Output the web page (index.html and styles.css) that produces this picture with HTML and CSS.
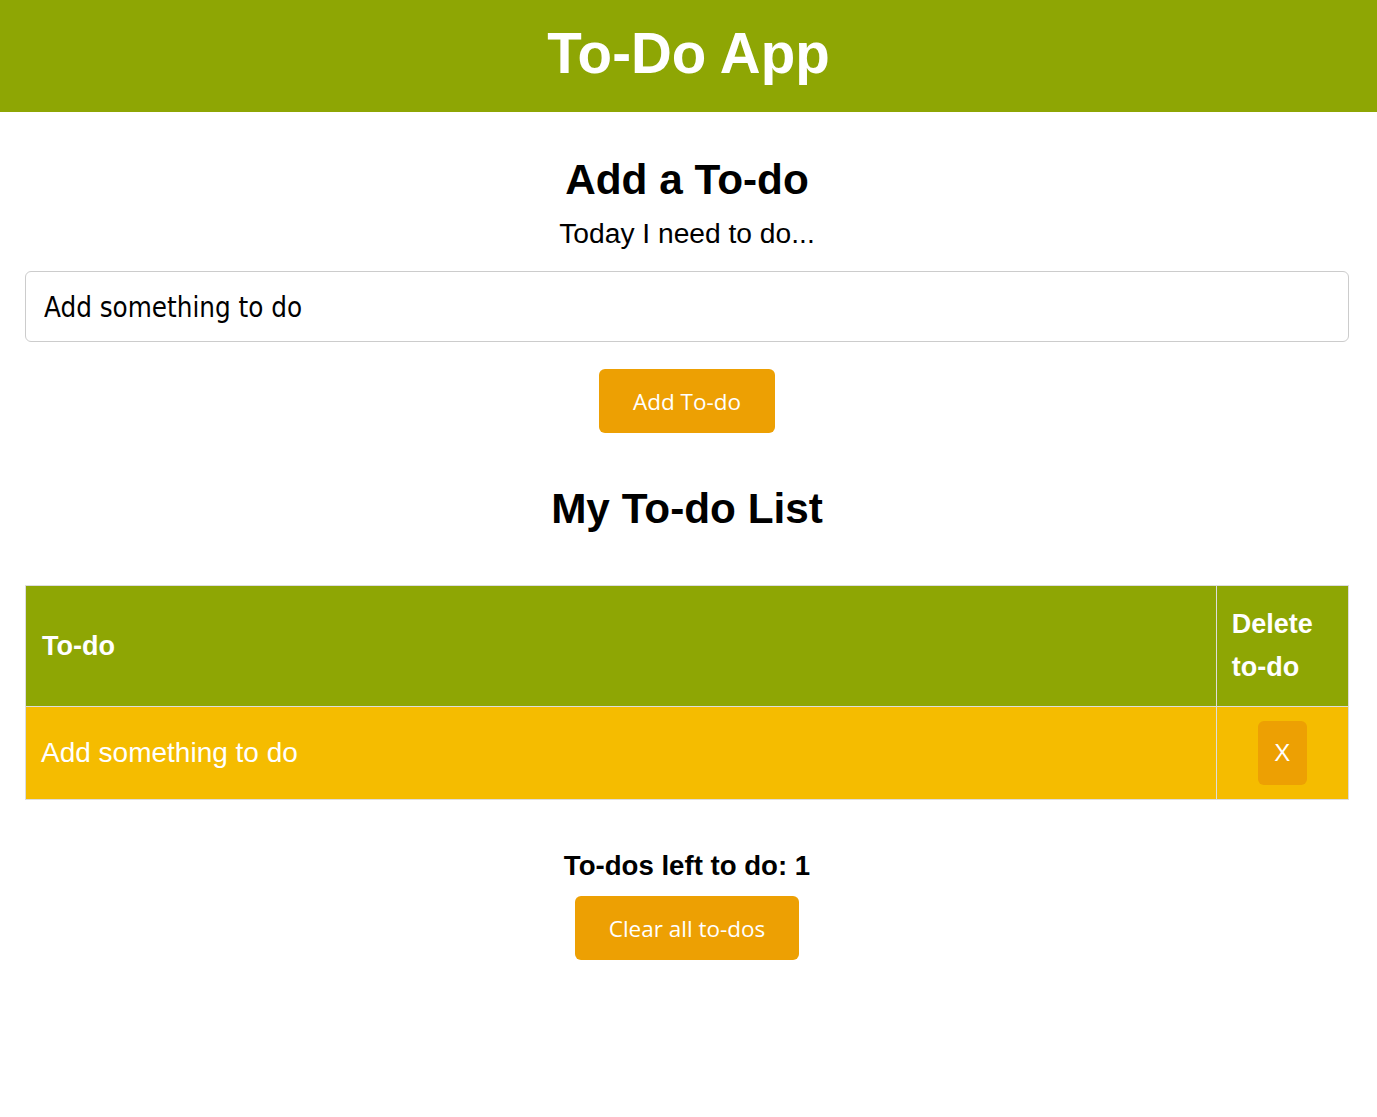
FILE: index.html
```html
<!DOCTYPE html>
<html lang="en">
<head>
<meta charset="utf-8">
<title>To-Do App</title>
<link rel="stylesheet" href="styles.css">
</head>
<body>
<header class="app-header">
  <h1 class="app-title">To-Do App</h1>
</header>
<main class="content">
  <section class="add-section">
    <h2 class="section-title">Add a To-do</h2>
    <p class="prompt">Today I need to do...</p>
    <input class="todo-input" type="text" value="Add something to do">
    <div class="btn-row">
      <button class="btn">Add To-do</button>
    </div>
  </section>
  <section class="list-section">
    <h2 class="section-title list-title">My To-do List</h2>
    <table class="todo-table">
      <thead>
        <tr>
          <th class="col-todo">To-do</th>
          <th class="col-delete">Delete to-do</th>
        </tr>
      </thead>
      <tbody>
        <tr>
          <td class="cell-todo">Add something to do</td>
          <td class="cell-delete"><button class="btn-delete">X</button></td>
        </tr>
      </tbody>
    </table>
    <p class="count">To-dos left to do: 1</p>
    <div class="btn-row">
      <button class="btn">Clear all to-dos</button>
    </div>
  </section>
</main>
</body>
</html>
```

FILE: styles.css
```css
html, body {
  margin: 0;
  padding: 0;
  background: #ffffff;
}

body {
  font-family: "Liberation Sans", Arial, sans-serif;
  color: #000000;
}

.app-header {
  background: #8ea604;
  height: 112px;
  display: flex;
  align-items: center;
  justify-content: center;
}

.app-title {
  margin: 0;
  color: #ffffff;
  font-size: 56.5px;
  font-weight: 700;
  line-height: 1;
  padding-bottom: 4px;
}

.content {
  padding: 0 28px 0 25px;
}

.add-section {
  text-align: center;
  padding-top: 44px;
}

.section-title {
  margin: 0;
  font-size: 42.3px;
  font-weight: 700;
  line-height: 48px;
}

.prompt {
  margin: 11px 0 0;
  font-size: 28.2px;
  line-height: 36px;
}

.todo-input {
  display: block;
  box-sizing: border-box;
  width: 100%;
  height: 71px;
  margin-top: 20px;
  padding: 0 18px;
  border: 1px solid #cccccc;
  border-radius: 6px;
  font-family: "DejaVu Sans Condensed", "DejaVu Sans", sans-serif;
  font-stretch: condensed;
  font-size: 27.5px;
  color: #000000;
  background: #ffffff;
  outline: none;
}

.btn-row {
  display: flex;
  justify-content: center;
}

.add-section .btn-row {
  margin-top: 27px;
}

.btn {
  height: 64px;
  padding: 0 34px;
  border: none;
  border-radius: 6px;
  background: #eda003;
  color: #ffffff;
  font-family: "Open Sans", "Noto Sans", sans-serif;
  font-size: 22.5px;
  cursor: pointer;
}

.list-section {
  text-align: center;
  padding-top: 52px;
}

.list-title {
  margin-bottom: 52px;
}

.todo-table {
  width: 100%;
  border-collapse: collapse;
  text-align: left;
}

.todo-table th,
.todo-table td {
  border: 1px solid #dddddd;
}

.todo-table th {
  background: #8ea604;
  color: #ffffff;
  font-size: 27px;
  font-weight: 700;
  line-height: 43px;
  padding: 17px 16px 17px 15px;
}

.todo-table th.col-todo {
  padding-left: 16px;
}

.col-delete {
  width: 10%;
}

.todo-table td {
  background: #f5bc00;
  color: #ffffff;
  font-size: 28px;
  padding: 14px 15px;
}

.cell-delete {
  text-align: center;
}

.btn-delete {
  width: 49px;
  height: 64px;
  border: none;
  border-radius: 6px;
  background: #eda003;
  color: #ffffff;
  font-family: "Liberation Sans", Arial, sans-serif;
  font-size: 24px;
  padding: 0;
  vertical-align: middle;
}

.count {
  margin: 50px 0 0;
  font-size: 27.6px;
  font-weight: 700;
  line-height: 32px;
}

.list-section .btn-row {
  margin-top: 14px;
}
```
